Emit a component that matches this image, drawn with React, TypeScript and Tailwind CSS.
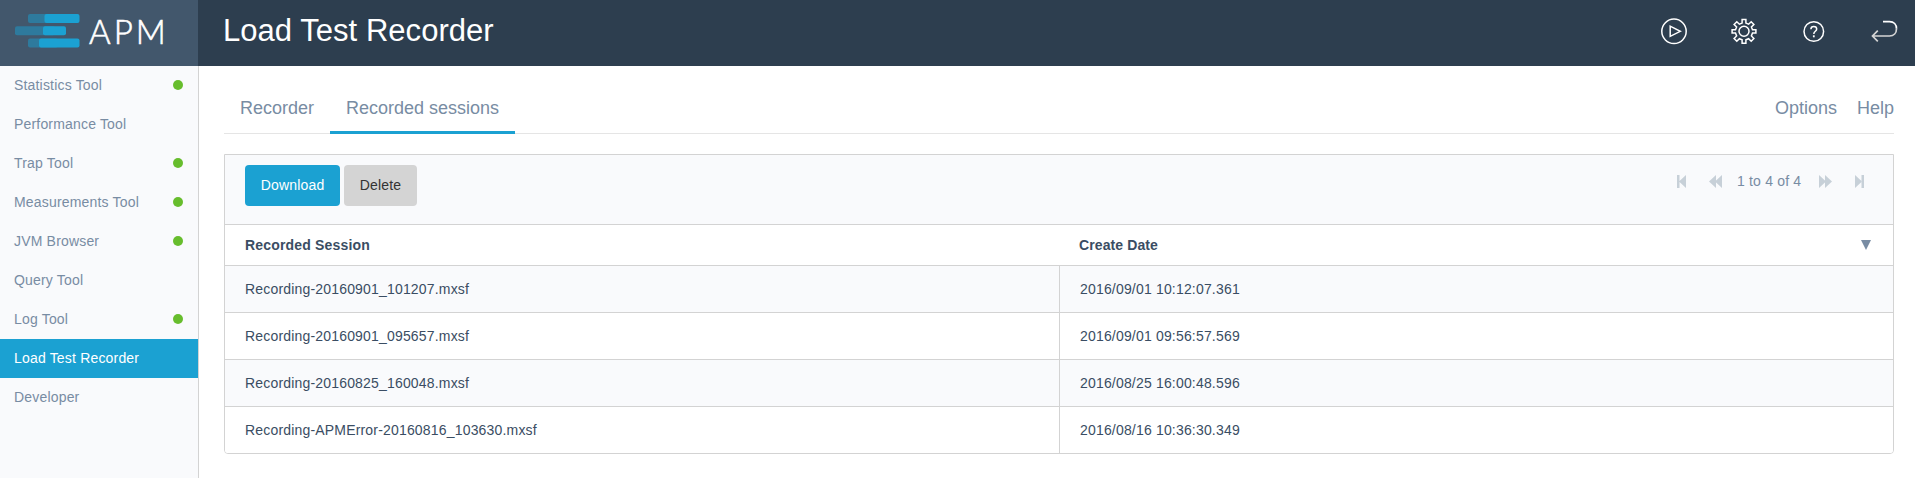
import React from "react";

const tools = [
  { name: "Statistics Tool", running: true },
  { name: "Performance Tool", running: false },
  { name: "Trap Tool", running: true },
  { name: "Measurements Tool", running: true },
  { name: "JVM Browser", running: true },
  { name: "Query Tool", running: false },
  { name: "Log Tool", running: true },
  { name: "Load Test Recorder", running: false },
  { name: "Developer", running: false },
];

const sessions = [
  ["Recording-20160901_101207.mxsf", "2016/09/01 10:12:07.361"],
  ["Recording-20160901_095657.mxsf", "2016/09/01 09:56:57.569"],
  ["Recording-20160825_160048.mxsf", "2016/08/25 16:00:48.596"],
  ["Recording-APMError-20160816_103630.mxsf", "2016/08/16 10:36:30.349"],
];

function Logo() {
  return (
    <div className="flex h-[66px] w-[198px] shrink-0 bg-[#42576c] pt-[14px] pl-[15px]">
      <svg width="65" height="34" className="shrink-0">
        <g fill="#2e7a9d">
          <rect x="13" y="0" width="30" height="9" rx="2" />
          <rect x="0" y="12.200" width="40" height="9" rx="2" />
          <rect x="13" y="24.500" width="30" height="9" rx="2" />
        </g>
        <g fill="#1ba1d2">
          <rect x="29.5" y="0" width="35" height="9" rx="2" />
          <rect x="28" y="12.200" width="23" height="9" rx="2" />
          <rect x="24" y="24.500" width="40.5" height="9" rx="2" />
        </g>
      </svg>
      <span className="-mt-[3px] ml-[9px] font-[Lato] text-[33px] leading-[40px] font-light tracking-[3px] text-white [-webkit-text-stroke:0.6px_#fff]">
        APM
      </span>
    </div>
  );
}

function HeaderIcons() {
  return (
    <div className="flex h-[66px] items-start gap-[42px] pt-[17px] pr-[17px]">
      <svg width="28" height="28" fill="none" stroke="#fff" strokeWidth="1.5">
        <circle cx="14" cy="14.3" r="12.2" />
        <path d="M10.2 9.2V19.4L20.3 14.3Z" />
      </svg>
      <svg width="28" height="28" fill="none" stroke="#fff" strokeWidth="1.5">
        <circle cx="14" cy="14.3" r="5" />
        <path d="M12.1 2.5h3.8v3.6l2.7 1.1 2.6-2.5 2.7 2.7-2.5 2.6 1.1 2.7h3.4v3.4h-3.4l-1.1 2.8 2.5 2.6-2.7 2.7-2.6-2.5-2.7 1.1v3.5h-3.8v-3.5l-2.7-1.1-2.6 2.5-2.7-2.7 2.5-2.6-1.1-2.8h-3.4v-3.4h3.4l1.1-2.7-2.5-2.6 2.7-2.7 2.6 2.5 2.7-1.1z" />
      </svg>
      <svg width="28" height="28" fill="none" stroke="#fff" strokeWidth="1.5">
        <circle cx="13.8" cy="14.5" r="9.8" />
        <path d="M10.9 12.2c0-1.7 1.2-2.7 2.9-2.7s2.9 1 2.9 2.6c0 2.2-2.9 2.2-2.9 4.9" strokeWidth="1.5" />
        <path d="M13.8 18.3v2" strokeWidth="1.8" />
      </svg>
      <svg width="28" height="28" fill="none" strokeWidth="1.7">
        <path d="M13 4.7h6.5c4.300 0 7 2.900 7 7.100" stroke="#fff" />
        <path d="M26.500 11.800c0 4.300-2.700 7.200-7 7.200H2.500M7.800 13.700L2.500 19l5.300 5.300" stroke="#d5d5d5" />
      </svg>
    </div>
  );
}

function Pager() {
  return (
    <div className="flex h-[16px] items-center">
      <svg width="9" height="13" fill="#c7d0d8">
        <path d="M0 0h2.500v13H0zM9 0v13L2 6.500z" />
      </svg>
      <svg width="13" height="13" className="ml-[23px]" fill="#c7d0d8">
        <path d="M7 0v13L0 6.500zM13 0v13L6 6.500z" />
      </svg>
      <span className="ml-[15px] w-[64px] text-[14px] leading-[16px] whitespace-nowrap text-[#788ca3]">1 to 4 of 4</span>
      <svg width="13" height="13" className="ml-[18px]" fill="#c7d0d8">
        <path d="M0 0v13l7-6.500zM6 0v13L13 6.500z" />
      </svg>
      <svg width="9" height="13" className="ml-[23px]" fill="#c7d0d8">
        <path d="M6.500 0H9v13H6.500zM0 0v13l7-6.500z" />
      </svg>
    </div>
  );
}

export default function App() {
  return (
    <div className="flex h-[478px] w-[1915px] flex-col overflow-hidden bg-white font-['Liberation_Sans',Arial,sans-serif] text-[14px] tracking-[0.18px]">
      <header className="flex h-[66px] shrink-0 bg-[#2d3e4f]">
        <Logo />
        <h1 className="ml-[25px] flex-1 pt-[13px] text-[31px] leading-[36px] tracking-[0.04px] text-white">Load Test Recorder</h1>
        <HeaderIcons />
      </header>
      <div className="flex flex-1">
        <nav className="w-[199px] shrink-0 border-r border-[#d3d3d3] bg-[#f9fafc]">
          {tools.map((tool) => (
            <a
              key={tool.name}
              className={
                tool.name === "Load Test Recorder"
                  ? "flex h-[39px] items-center justify-between bg-[#1ba1d2] pr-[15px] pl-[14px] text-white"
                  : "flex h-[39px] items-center justify-between pr-[15px] pl-[14px] text-[#788ca3]"
              }
            >
              <span>{tool.name}</span>
              {tool.running && <i className="mb-px size-[10px] rounded-full bg-[#67bd2d]" />}
            </a>
          ))}
        </nav>
        <main className="flex-1 pt-[23px] pr-[21px] pl-[25px]">
          <div className="flex h-[45px] border-b border-[#e5e5e5] text-[18px] leading-[38px] tracking-normal text-[#788ca3]">
            <span className="w-[106px] pl-[16px]">Recorder</span>
            <span className="h-[45px] w-[185px] border-b-3 border-[#1ba1d2] pl-[16px]">Recorded sessions</span>
            <div className="ml-auto flex gap-[20px]">
              <span>Options</span>
              <span>Help</span>
            </div>
          </div>
          <section className="mt-[20px] overflow-hidden rounded-b-[4px] border border-[#d3d3d3] text-[#3a4d63]">
            <div className="flex h-[69px] items-start bg-[#f9fafc] pt-[10px] pr-[29px] pl-[20px]">
              <button className="h-[41px] w-[95px] rounded-[4px] bg-[#1ba1d2] text-white">Download</button>
              <button className="ml-[4px] h-[41px] w-[73px] rounded-[4px] bg-[#d4d4d4] text-[#333]">Delete</button>
              <div className="mt-[8px] ml-auto">
                <Pager />
              </div>
            </div>
            <div className="flex h-[41px] items-center border-t border-[#d3d3d3] font-bold">
              <span className="w-[835px] pl-[20px]">Recorded Session</span>
              <span className="flex-1 pl-[19px] tracking-[0.1px]">Create Date</span>
              <svg width="10" height="10" className="mr-[22px]">
                <path d="M0 0h10L5 10z" fill="#788ca3" />
              </svg>
            </div>
            {sessions.map(([file, date]) => (
              <div key={file} className="flex h-[47px] border-t border-[#d3d3d3] leading-[46px] even:bg-white odd:bg-[#f9fafc]">
                <span className="w-[835px] border-r border-[#d3d3d3] pl-[20px]">{file}</span>
                <span className="pl-[20px]">{date}</span>
              </div>
            ))}
          </section>
        </main>
      </div>
    </div>
  );
}
